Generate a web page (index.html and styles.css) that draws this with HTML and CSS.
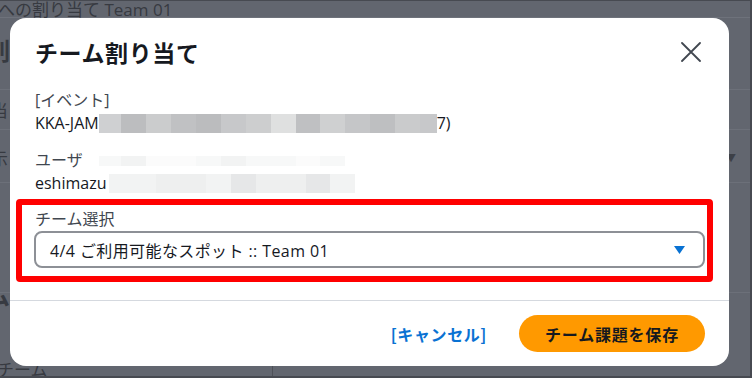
FILE: index.html
```html
<!DOCTYPE html>
<html lang="ja">
<head>
<meta charset="utf-8">
<title>チーム割り当て</title>
<link rel="stylesheet" href="styles.css">
</head>
<body>
<div class="page">
  <div class="crumb">への割り当て Team 01</div>
  <div class="bg-row r1"><span class="bg-h">割</span></div>
  <div class="bg-row r2"><span class="bg-t">当</span></div>
  <div class="bg-row r3"><span class="bg-t">示</span><span class="bg-caret">▼</span></div>
  <div class="bg-row r4"><span class="bg-h">ム</span><span></span></div>
  <div class="bg-row r5"><span class="bg-t small">チーム</span><span class="bg-cell"></span></div>
</div>

<div class="modal" role="dialog" aria-label="チーム割り当て">
  <div class="modal-header">
    <h2 class="modal-title">チーム割り当て</h2>
    <button class="close" aria-label="閉じる">
      <svg width="20" height="20" viewBox="0 0 20 20"><path d="M1 1 L19 19 M19 1 L1 19" stroke="#414750" stroke-width="1.8" stroke-linecap="round" fill="none"/></svg>
    </button>
  </div>
  <div class="modal-body">
    <div class="field">
      <div class="label">[イベント]</div>
      <div class="value">KKA-JAM<span class="mosaic"><i class="w22 c1"></i><i class="c2"></i><i class="c3"></i><i class="c4"></i><i class="c5"></i><i class="c6"></i><i class="c7"></i><i class="c8"></i><i class="w24 c9"></i><i class="c10"></i><i class="c11"></i><i class="c12"></i><i class="c13"></i><i class="w17 c14"></i></span>7)</div>
    </div>
    <div class="field">
      <div class="label">ユーザ<span class="mosaic faint top"><i class="w22 f1"></i><i class="f2"></i><i class="f0"></i><i class="f0"></i><i class="f1"></i><i class="f2"></i><i class="f1"></i><i class="f1"></i><i class="w24 f0"></i><i class="f1"></i></span></div>
      <div class="value">eshimazu<span class="mosaic faint"><i class="w22 f2"></i><i class="f2"></i><i class="f3"></i><i class="f3"></i><i class="f2"></i><i class="f4"></i><i class="f3"></i><i class="f3"></i><i class="w24 f4"></i><i class="f2"></i></span></div>
    </div>
    <div class="field select-field">
      <div class="label">チーム選択</div>
      <div class="select">
        <span class="select-text">4/4 ご利用可能なスポット :: Team 01</span>
        <svg class="caret" width="11" height="8" viewBox="0 0 11 8"><path d="M0 0 H11 L5.5 8 Z" fill="#0972d3"/></svg>
      </div>
    </div>
  </div>
  <div class="modal-footer">
    <a class="cancel" href="#">[キャンセル]</a>
    <button class="primary">チーム課題を保存</button>
  </div>
  <div class="highlight"></div>
</div>
</body>
</html>
```

FILE: styles.css
```css
* { box-sizing: border-box; }
html, body { margin: 0; padding: 0; }
body {
  width: 752px;
  height: 378px;
  overflow: hidden;
  background: #62666f;
  font-family: "Open Sans", "Noto Sans CJK JP", sans-serif;
  position: relative;
  border-top: 1px solid #474a51;
  border-right: 2px solid #474a51;
  border-bottom: 2px solid #474a51;
}

/* background page (behind overlay) */
.page {
  display: flex;
  flex-direction: column;
  color: #373a41;
}
.crumb {
  height: 17px;
  line-height: 17px;
  font-size: 17px;
  margin-left: -2px;
  border-bottom: 1px solid #6e727b;
  white-space: nowrap;
}
.bg-row {
  display: flex;
  justify-content: space-between;
  align-items: center;
  border-bottom: 1px solid #6c7079;
}
.r1 { height: 72px; align-items: flex-start; padding-top: 20px; }
.r2 { height: 40px; }
.r3 { height: 53px; padding-top: 2px; }
.r4 { height: 110px; align-items: flex-start; padding-top: 100px; }
.r5 { height: 86px; align-items: flex-end; border-bottom: 0; }
.bg-h { font-size: 24px; font-weight: 700; margin-left: -14px; line-height: 26px; }
.bg-t { font-size: 17px; margin-left: -9px; }
.bg-t.small { margin-left: -3px; line-height: 18px; }
.bg-caret { font-size: 10px; margin-right: 14px; color: #3d4047; }
.bg-cell { width: 478px; height: 14px; border-left: 1px solid #4e5158; }

/* modal */
.modal {
  position: absolute;
  left: 10px;
  top: 17px;
  width: 719px;
  height: 348px;
  background: #fff;
  border-radius: 16px;
  display: flex;
  flex-direction: column;
  color: #16191f;
}
.modal-header {
  display: flex;
  justify-content: space-between;
  align-items: center;
  padding: 18px 28px 0 25px;
  height: 50px;
}
.modal-title {
  margin: 0;
  font-size: 23px;
  line-height: 32px;
  font-weight: 700;
  letter-spacing: 0.6px;
  font-family: "Noto Sans CJK JP", sans-serif;
}
.close {
  border: 0;
  background: none;
  padding: 0;
  width: 20px;
  height: 20px;
  display: flex;
}
.modal-body {
  padding: 21px 24px 0 25px;
  display: flex;
  flex-direction: column;
  gap: 14px;
  height: 232px;
}
.label {
  font-size: 16px;
  line-height: 22px;
  color: #414750;
  white-space: nowrap;
}
.value {
  font-size: 16px;
  line-height: 24px;
  color: #16191f;
  white-space: nowrap;
}
.mosaic {
  display: inline-flex;
  height: 19px;
  vertical-align: -4px;
}
.mosaic i { display: block; width: 25px; height: 100%; }
.mosaic i.w22 { width: 22px; }
.mosaic i.w24 { width: 24px; }
.mosaic i.w17 { width: 17px; }
.mosaic.faint { margin-left: 3px; }
.mosaic.top { height: 10px; vertical-align: 0; margin-left: 16px; }
.c1 { background: #cfd0d2; }
.c2 { background: #bcbdbf; }
.c3 { background: #cbcccd; }
.c4 { background: #c0c1c3; }
.c5 { background: #bbbcbe; }
.c6 { background: #c7c8ca; }
.c7 { background: #cdcecf; }
.c8 { background: #dfe0e0; }
.c9 { background: #bfc0c2; }
.c10 { background: #cfd0d1; }
.c11 { background: #c5c6c8; }
.c12 { background: #bebfc1; }
.c13 { background: #cacbcc; }
.c14 { background: #c7c8ca; }
.f0 { background: #fbfbfb; }
.f1 { background: #f7f8f8; }
.f2 { background: #f2f3f3; }
.f3 { background: #eeefef; }
.f4 { background: #e6e7e8; }

.select-field { margin-top: -1px; }
.select-field .label { margin-bottom: 1px; }
.select {
  height: 37px;
  margin-left: -1px;
  border: 2px solid #8d9096;
  border-radius: 8px;
  display: flex;
  align-items: center;
  justify-content: space-between;
  padding: 0 18px 0 14px;
}
.select-text {
  font-size: 16px;
  letter-spacing: 0.4px;
  color: #16191f;
  white-space: nowrap;
}
.caret { display: block; margin-top: 1px; }

.modal-footer {
  border-top: 1px solid #d5d9df;
  display: flex;
  justify-content: flex-end;
  align-items: center;
  gap: 32px;
  padding: 14px 24px 14px 0;
}
.cancel {
  color: #0972d3;
  font-weight: 700;
  font-size: 16px;
  letter-spacing: 0.6px;
  text-decoration: none;
  font-family: "Noto Sans CJK JP", sans-serif;
}
.primary {
  width: 186px;
  height: 37px;
  border: 0;
  border-radius: 19px;
  background: #ff9900;
  color: #16191f;
  font-weight: 700;
  font-size: 16px;
  font-family: "Noto Sans CJK JP", sans-serif;
  letter-spacing: 0.8px;
}

.highlight {
  position: absolute;
  left: 6px;
  top: 181px;
  width: 697px;
  height: 83px;
  border: 6px solid #ff0000;
  border-radius: 4px;
  pointer-events: none;
}
```
